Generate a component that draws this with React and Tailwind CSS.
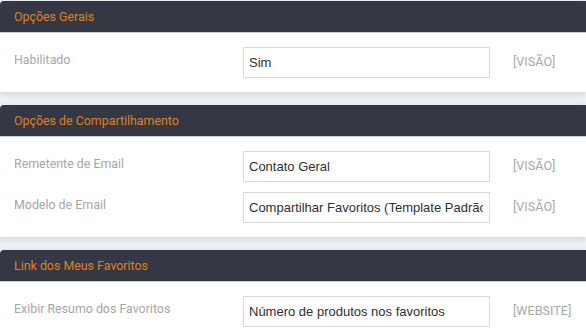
import React from 'react';

const sections = [
  {
    title: 'Opções Gerais',
    rows: [{ label: 'Habilitado', value: 'Sim', scope: '[VISÃO]' }],
  },
  {
    title: 'Opções de Compartilhamento',
    rows: [
      { label: 'Remetente de Email', value: 'Contato Geral', scope: '[VISÃO]' },
      { label: 'Modelo de Email', value: 'Compartilhar Favoritos (Template Padrão)', scope: '[VISÃO]' },
    ],
  },
  {
    title: 'Link dos Meus Favoritos',
    rows: [{ label: 'Exibir Resumo dos Favoritos', value: 'Número de produtos nos favoritos', scope: '[WEBSITE]' }],
  },
];

const Section = ({ title, rows }) => (
  <div className="mb-[13px] rounded-tl-[4px] bg-white shadow-[0_2px_6px_rgba(0,0,0,0.12)]">
    <div className="flex h-[32px] items-center rounded-tl-[4px] border-b border-[#c9ccd2] bg-[#333844] px-[14px] pt-[1px]">
      <span className="text-[12.4px] text-[#e0801a]" style={{ fontFamily: 'Roboto, sans-serif' }}>{title}</span>
    </div>
    <div className="flex flex-col gap-[10px] pb-[14px] pt-[14px]">
      {rows.map((row) => (
        <div key={row.label} className="flex items-center">
          <div
            className="w-[243px] pb-[5px] pl-[14px] text-[12.4px] text-[#a6a6a6]"
            style={{ fontFamily: 'Roboto, sans-serif' }}
          >
            {row.label}
          </div>
          <div className="flex h-[31px] w-[247px] items-center overflow-hidden whitespace-nowrap border border-[#d9d9d9] bg-white pl-[5px] pr-[6px] text-[13px] text-[#303030]"
            style={{ fontFamily: '"Liberation Sans", Arial, sans-serif' }}
          >
            <span className="overflow-hidden">{row.value}</span>
          </div>
          <div
            className="pl-[23px] text-[12.6px] text-[#a8a8a8]"
            style={{ fontFamily: 'Roboto, sans-serif' }}
          >
            {row.scope}
          </div>
        </div>
      ))}
    </div>
  </div>
);

export default function App() {
  return (
    <div className="min-h-[331px] w-[586px] overflow-hidden bg-[#eef0f5] pt-[1px]">
      {sections.map((s) => (
        <Section key={s.title} {...s} />
      ))}
    </div>
  );
}
